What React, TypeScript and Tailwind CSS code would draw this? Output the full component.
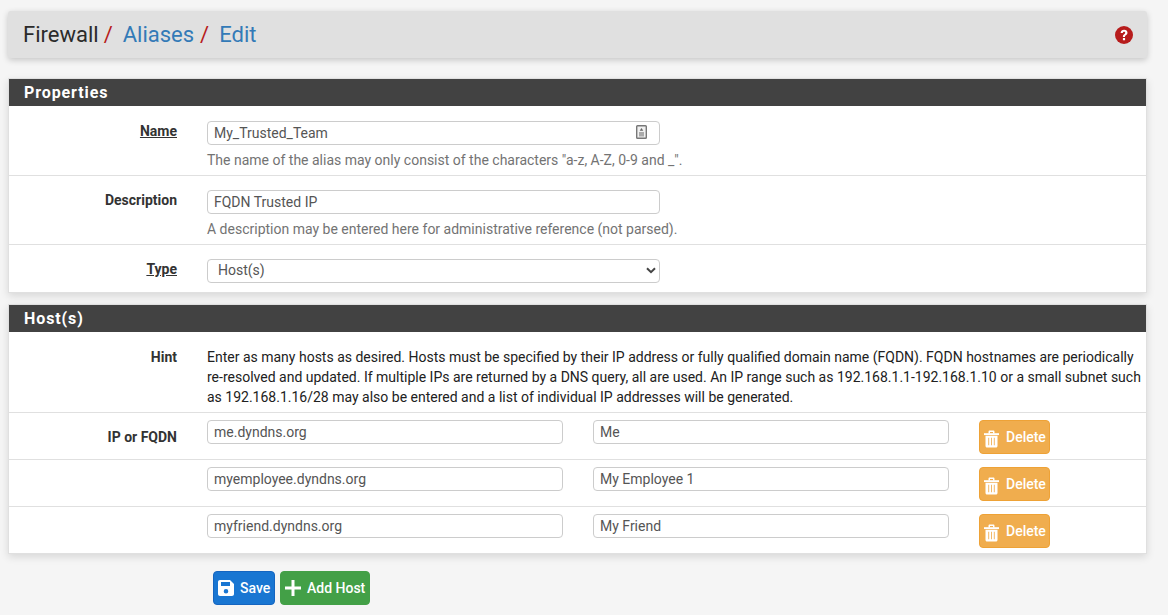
import React from "react";

const font = { fontFamily: "Roboto, sans-serif" };

function Trash() {
  return (
    <svg viewBox="0 0 16 18" className="mr-[7px] mt-[3px] h-[18px] w-[15px] shrink-0" fill="#fff">
      <path d="M0 2.800h16v2H0z" />
      <path d="M4.800 3V1.200C4.800 .5 5.300 0 6 0h4c.7 0 1.200.5 1.200 1.200V3H9.600V1.600H6.400V3z" />
      <path fillRule="evenodd" d="M1.600 5.400h12.800v11c0 .9-.7 1.600-1.600 1.600H3.200c-.9 0-1.600-.7-1.600-1.600zM4.600 7.600v8h.9v-8zM7.550 7.600v8h.9v-8zM10.500 7.600v8h.9v-8z" />
    </svg>
  );
}

function TextInput({ value, width }: { value: string; width: string }) {
  return (
    <input
      readOnly
      value={value}
      className={`${width} h-[24px] rounded-[4px] border border-[#ccc] bg-white px-[6px] text-[14px] text-[#555] outline-none`}
      style={font}
    />
  );
}

function Row({ label, underline, children, className }: { label?: string; underline?: boolean; children: React.ReactNode; className: string }) {
  return (
    <div className={`flex border-b border-[#e0e0e0] last:border-b-0 ${className}`}>
      <div className={`w-[168px] shrink-0 text-right text-[14px] leading-[20px] font-bold text-[#333] ${underline ? "underline" : ""}`}>
        {label}
      </div>
      <div className="ml-[30px] min-w-0 flex-1">{children}</div>
    </div>
  );
}

function HostRow({ label, host, name, last }: { label?: string; host: string; name: string; last?: boolean }) {
  return (
    <div className={last ? "flex h-[46px]" : "flex h-[47px] border-b border-[#e0e0e0]"}>
      <div className="w-[168px] shrink-0 pt-[14px] text-right text-[14px] leading-[20px] font-bold text-[#333]">{label}</div>
      <div className="ml-[30px] flex items-start pt-[7px]">
        <TextInput value={host} width="w-[356px]" />
        <div className="ml-[30px]">
          <TextInput value={name} width="w-[356px]" />
        </div>
        <button className="ml-[30px] flex h-[34px] w-[71px] items-center rounded-[4px] border border-[#eea236] bg-[#f0ad4e] pl-[4px] text-[14px] font-medium text-white">
          <Trash />
          Delete
        </button>
      </div>
    </div>
  );
}

function Panel({ title, children }: { title: string; children: React.ReactNode }) {
  return (
    <section className="ml-[8px] w-[1139px] border border-[#e0e0e0] bg-white shadow-[0_3px_8px_rgba(0,0,0,0.12)]">
      <h2 className="h-[27px] bg-[#424242] pl-[15px] text-[16px] leading-[27px] font-bold tracking-[0.9px] text-white">{title}</h2>
      {children}
    </section>
  );
}

export default function App() {
  return (
    <div className="h-[615px] w-[1168px] overflow-hidden bg-[#f5f5f5] pt-[11px]" style={font}>
      <div className="ml-[8px] flex h-[47px] w-[1139px] items-center justify-between rounded-[3px] bg-[#e0e0e0] pr-[14px] pl-[15px] text-[22px] shadow-[0_2px_6px_rgba(0,0,0,0.2)]">
        <div className="flex items-center text-[#2b2b2b]">
          <span>Firewall</span>
          <span className="ml-[5px] text-[#b71c1c]">/</span>
          <span className="ml-[10px] text-[#337ab7]">Aliases</span>
          <span className="ml-[6px] text-[#b71c1c]">/</span>
          <span className="ml-[10px] text-[#337ab7]">Edit</span>
        </div>
        <svg viewBox="0 0 18 18" className="h-[18px] w-[18px]">
          <circle cx="9" cy="9" r="9" fill="#b71c1c" />
          <path d="M5.600 6.900C5.800 4.900 7.200 3.800 9.100 3.800c2 0 3.400 1.200 3.400 2.900 0 1.300-.7 2-1.600 2.600-.7.5-.9.7-.9 1.400v.3H7.900v-.5c0-1.100.4-1.700 1.300-2.300.7-.5 1-.8 1-1.400 0-.6-.5-1-1.100-1-.7 0-1.200.4-1.300 1.200z" fill="#fff" />
          <rect x="7.900" y="12" width="2.200" height="2.200" rx="0.3" fill="#fff" />
        </svg>
      </div>

      <div className="mt-[20px]">
        <Panel title="Properties">
          <Row label="Name" underline className="h-[70px] pt-[15px]">
            <div className="relative w-[453px]">
              <TextInput value="My_Trusted_Team" width="w-full" />
              <svg viewBox="0 0 11 14" className="absolute top-[4px] right-[13px] h-[14px] w-[11px]">
                <rect x="0.7" y="0.7" width="9.600" height="12.600" rx="0.8" fill="#f0f0f0" stroke="#777" strokeWidth="1.400" />
                <path d="M5.500 3l1.800 2.800H3.700z" fill="#666" />
                <rect x="3" y="7" width="5" height="4.500" fill="#aaa" />
              </svg>
            </div>
            <p className="mt-[5px] text-[14px] leading-[20px] text-[#737373]">
              The name of the alias may only consist of the characters "a-z, A-Z, 0-9 and _".
            </p>
          </Row>
          <Row label="Description" className="h-[69px] pt-[14px]">
            <TextInput value="FQDN Trusted IP" width="w-[453px]" />
            <p className="mt-[5px] text-[14px] leading-[20px] text-[#737373]">
              A description may be entered here for administrative reference (not parsed).
            </p>
          </Row>
          <Row label="Type" underline className="h-[47px] pt-[14px]">
            <div className="relative -mt-[1px] w-[453px]">
              <select
                defaultValue="Host(s)"
                className="h-[24px] w-full appearance-none rounded-[4px] border border-[#ccc] bg-white pr-[6px] pl-[10px] text-[14px] text-[#555] outline-none"
                style={font}
              >
                <option>Host(s)</option>
              </select>
              <svg viewBox="0 0 10 7" className="pointer-events-none absolute top-[9px] right-[4px] h-[7px] w-[10px]">
                <path d="M1 1.200l4 4 4-4" fill="none" stroke="#444" strokeWidth="2" />
              </svg>
            </div>
          </Row>
        </Panel>
      </div>

      <div className="mt-[11px]">
        <Panel title="Host(s)">
          <Row label="Hint" className="h-[81px] pt-[15px]">
            <p className="text-[14px] leading-[20px] text-[#212121]">
              Enter as many hosts as desired. Hosts must be specified by their IP address or fully qualified domain name (FQDN). FQDN hostnames are periodically re-resolved and updated. If multiple IPs are returned by a DNS query, all are used. An IP range such as 192.168.1.1-192.168.1.10 or a small subnet such as 192.168.1.16/28 may also be entered and a list of individual IP addresses will be generated.
            </p>
          </Row>
          <HostRow label="IP or FQDN" host="me.dyndns.org" name="Me" />
          <HostRow host="myemployee.dyndns.org" name="My Employee 1" />
          <HostRow host="myfriend.dyndns.org" name="My Friend" last />
        </Panel>
      </div>

      <div className="mt-[17px] ml-[213px] flex gap-[5px]">
        <button className="flex h-[34px] w-[62px] items-center rounded-[4px] border border-[#1565c0] bg-[#1976d2] pl-[4px] text-[14px] font-medium text-white">
          <svg viewBox="0 0 16 16" className="mr-[6px] h-[16px] w-[16px] shrink-0">
            <path fillRule="evenodd" fill="#fff" d="M2 0h10l4 4v10c0 1.100-.9 2-2 2H2c-1.100 0-2-.9-2-2V2C0 .9.9 0 2 0zm1 2v4h9V2zm5 7a2.300 2.300 0 100 4.600a2.300 2.300 0 000-4.600z" />
          </svg>
          Save
        </button>
        <button className="flex h-[34px] w-[90px] items-center rounded-[4px] border border-[#43a047] bg-[#43a047] pl-[4px] text-[14px] font-medium text-white">
          <svg viewBox="0 0 16 16" className="mr-[6px] h-[16px] w-[16px] shrink-0">
            <path d="M6.500 0h3v6.500H16v3H9.500V16h-3V9.500H0v-3h6.500z" fill="#fff" />
          </svg>
          Add Host
        </button>
      </div>
    </div>
  );
}
